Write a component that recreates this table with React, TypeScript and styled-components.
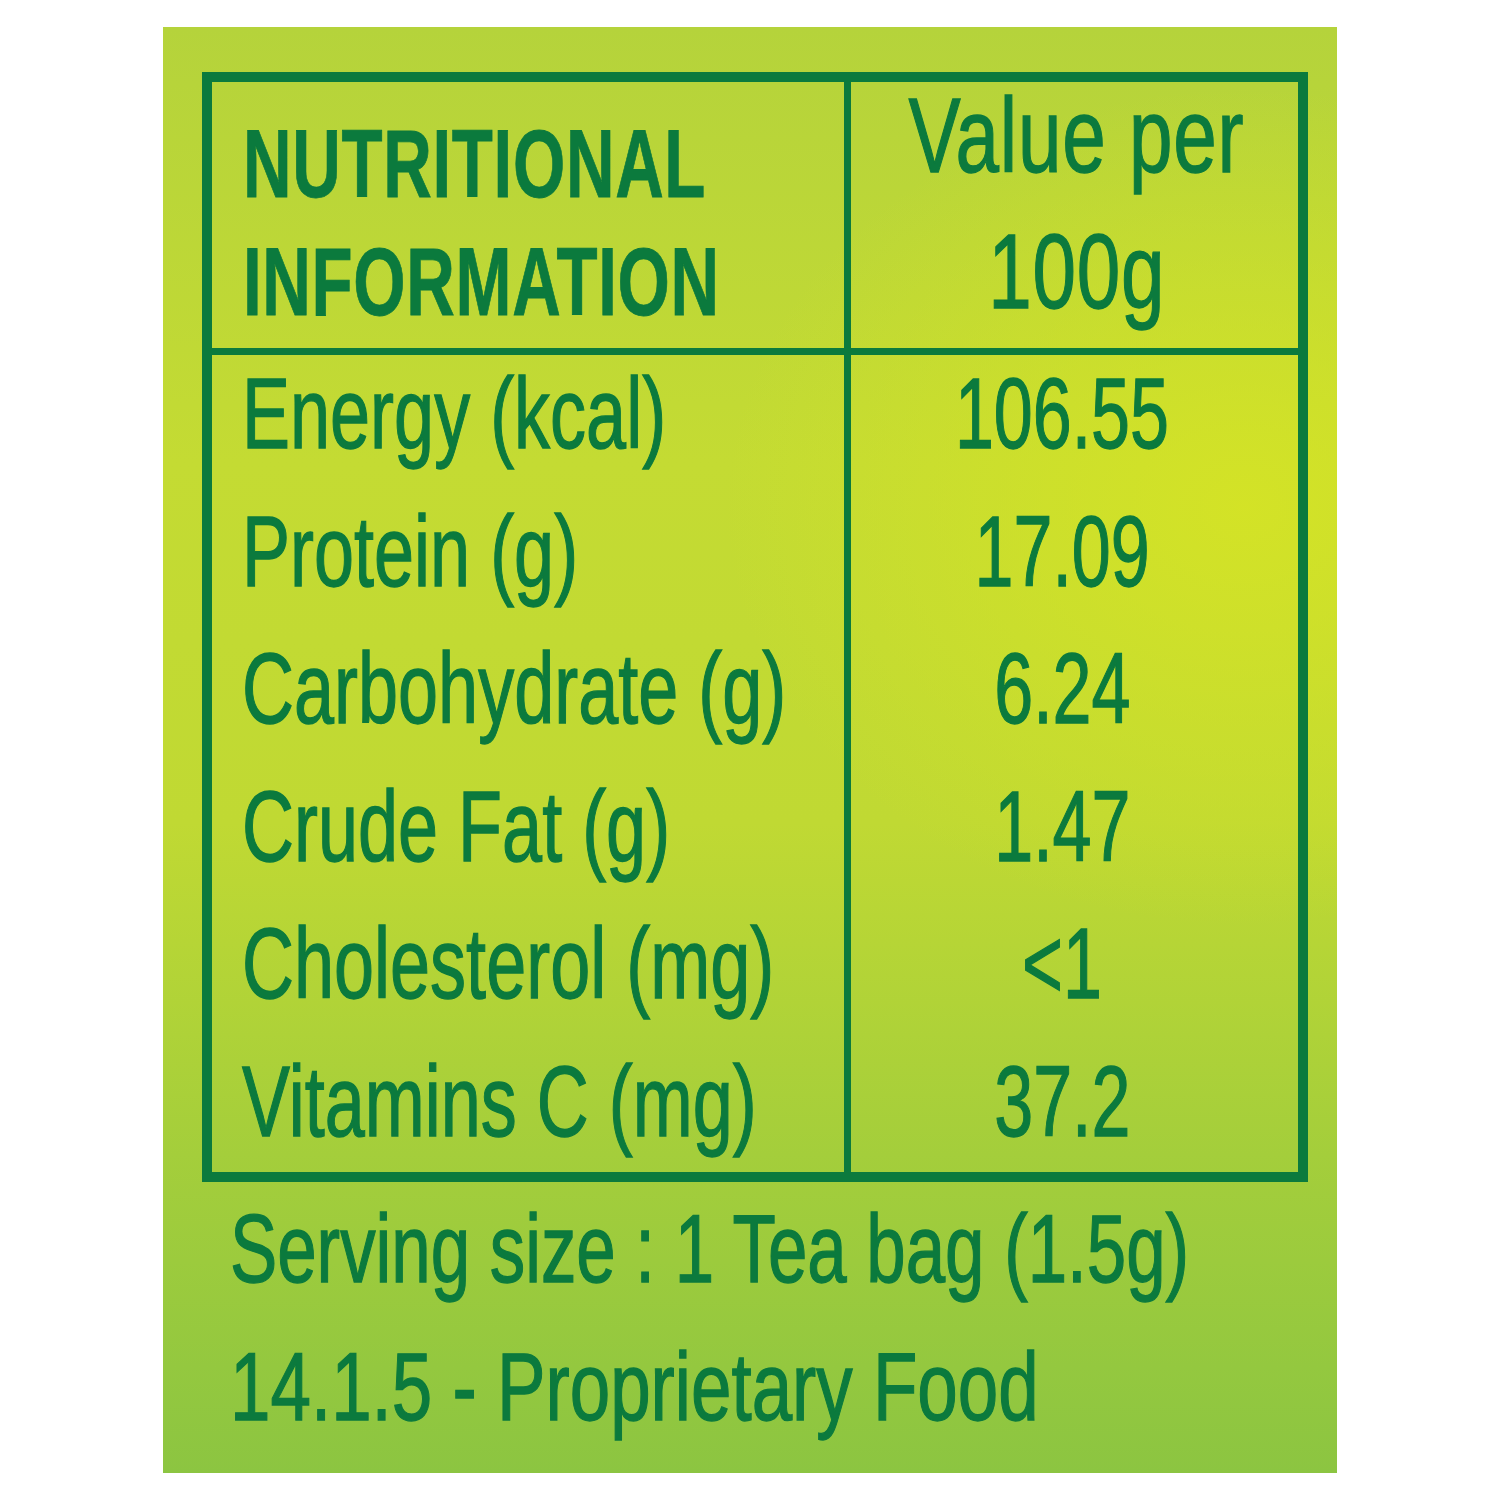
import React from 'react'
import styled, { createGlobalStyle } from 'styled-components'

const green = '#0b7a3d'

const rows = [
  { label: 'Energy (kcal)', value: '106.55' },
  { label: 'Protein (g)', value: '17.09' },
  { label: 'Carbohydrate (g)', value: '6.24' },
  { label: 'Crude Fat (g)', value: '1.47' },
  { label: 'Cholesterol (mg)', value: '<1' },
  { label: 'Vitamins C (mg)', value: '37.2' },
]

export default function App() {
  return (
    <>
      <GlobalStyle />
      <Page>
        <Panel>
          <Table>
            <HeadLeft>
              <HeadTitle>
                <Squeeze $x={0.7}>NUTRITIONAL</Squeeze>
              </HeadTitle>
              <HeadTitle>
                <Squeeze $x={0.7}>INFORMATION</Squeeze>
              </HeadTitle>
            </HeadLeft>
            <HeadRight>
              <HeadValue>
                <Squeeze $x={0.745} $center>Value per</Squeeze>
              </HeadValue>
              <HeadValue>
                <Squeeze $x={0.745} $center>100g</Squeeze>
              </HeadValue>
            </HeadRight>
            <LabelCol>
              {rows.map((r) => (
                <Line key={r.label}>
                  <Squeeze $x={0.72}>{r.label}</Squeeze>
                </Line>
              ))}
            </LabelCol>
            <ValueCol>
              {rows.map((r) => (
                <Line key={r.label}>
                  <Squeeze $x={0.7} $center>{r.value}</Squeeze>
                </Line>
              ))}
            </ValueCol>
          </Table>
          <Footer>
            <FootLine>
              <Squeeze $x={0.73}>Serving size : 1 Tea bag (1.5g)</Squeeze>
            </FootLine>
            <FootLine>
              <Squeeze $x={0.75}>14.1.5 - Proprietary Food</Squeeze>
            </FootLine>
          </Footer>
        </Panel>
      </Page>
    </>
  )
}

const GlobalStyle = createGlobalStyle`
  html, body {
    margin: 0;
    background: #ffffff;
  }
  body {
    font-family: "Liberation Sans", Arial, sans-serif;
    color: ${green};
  }
`

const Page = styled.div`
  padding: 27px 0 0 163px;
`

const Panel = styled.section`
  box-sizing: border-box;
  width: 1174px;
  height: 1446px;
  padding: 45px 29px 0 39px;
  display: flex;
  flex-direction: column;
  background:
    radial-gradient(ellipse 520px 420px at 1080px 480px, rgba(214, 228, 36, 0.85), rgba(214, 228, 36, 0) 100%),
    linear-gradient(180deg, #b5d33b 0%, #c4db33 30%, #c0d933 55%, #a4ce3b 78%, #8cc541 100%);
`

const Table = styled.div`
  box-sizing: border-box;
  width: 1106px;
  border: 10px solid ${green};
  display: grid;
  grid-template-columns: 639px 1fr;
  grid-template-rows: 273px 817px;
`

const HeadLeft = styled.div`
  box-sizing: border-box;
  border-right: 7px solid ${green};
  border-bottom: 7px solid ${green};
  padding: 34px 0 0 31px;
  display: flex;
  flex-direction: column;
  gap: 22px;
`

const HeadTitle = styled.div`
  font-size: 96px;
  line-height: 96px;
  font-weight: 700;
  letter-spacing: 1px;
  -webkit-text-stroke: 0.8px ${green};
`

const HeadRight = styled.div`
  box-sizing: border-box;
  border-bottom: 7px solid ${green};
  padding-top: 1px;
  display: flex;
  flex-direction: column;
  gap: 31px;
  text-align: center;
`

const HeadValue = styled.div`
  font-size: 105px;
  line-height: 105px;
  letter-spacing: 1px;
  -webkit-text-stroke: 1.3px ${green};
`

const LabelCol = styled.div`
  box-sizing: border-box;
  border-right: 7px solid ${green};
  padding-left: 30px;
  display: flex;
  flex-direction: column;
  gap: 20.5px;
`

const ValueCol = styled.div`
  box-sizing: border-box;
  padding-right: 29px;
  display: flex;
  flex-direction: column;
  gap: 20.5px;
  text-align: center;
`

const Line = styled.div`
  font-size: 100px;
  line-height: 117px;
  white-space: nowrap;
  -webkit-text-stroke: 1.3px ${green};
`

const Footer = styled.div`
  margin-top: 18px;
  padding-left: 28px;
  display: flex;
  flex-direction: column;
  gap: 41px;
`

const FootLine = styled.div`
  font-size: 97px;
  line-height: 97px;
  white-space: nowrap;
  -webkit-text-stroke: 1.3px ${green};
`

const Squeeze = styled.span<{ $x: number; $center?: boolean }>`
  display: inline-block;
  white-space: nowrap;
  transform: scaleX(${(p) => p.$x});
  transform-origin: ${(p) => (p.$center ? 'center' : 'left')} center;
`
